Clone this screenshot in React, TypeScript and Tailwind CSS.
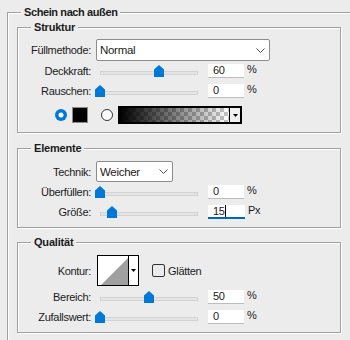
import React from "react";

const Label = ({ children }: { children: React.ReactNode }) => (
  <div className="w-[73px] mr-[5px] shrink-0 text-right leading-[14px]">{children}</div>
);

const Chevron = () => (
  <svg width="9" height="5" viewBox="0 0 9 5" className="shrink-0">
    <polyline points="0.5,0.5 4.5,4.5 8.5,0.5" fill="none" stroke="#505050" strokeWidth="1" />
  </svg>
);

const Select = ({ value, width, height }: { value: string; width: string; height: string }) => (
  <div
    className={`${width} ${height} flex items-center justify-between bg-white border border-[#8c8c8c] rounded-[2px] pl-[3px] pr-[4px]`}
  >
    <span className="text-[11.5px] leading-[14px]">{value}</span>
    <Chevron />
  </div>
);

const Slider = ({ pct }: { pct: number }) => {
  // thumb centre sits on the track, which starts 4px in and is 98px long
  const left = 4 + (pct / 100) * 98 - 5;
  return (
    <div className="relative w-[107px] h-[14px] shrink-0">
      <div className="absolute left-[4px] right-[5px] top-[7px] h-[4px] bg-[#e4e4e4] border border-[#d3d3d3]" />
      <svg
        className="absolute top-[1px]"
        style={{ left: `${left}px` }}
        width="10"
        height="12"
        viewBox="0 0 10 12"
      >
        <path d="M0 4.5 L5 0 L10 4.5 V12 H0 Z" fill="#0078d7" />
      </svg>
    </div>
  );
};

const Field = ({ value, focused }: { value: string; focused?: boolean }) => (
  <div
    className={
      focused
        ? "ml-[5px] w-[37px] h-[14px] bg-white border-b-2 border-[#0067c0] pl-[5px] flex items-center"
        : "ml-[5px] w-[36px] h-[14px] bg-white border-b border-[#bdbdbd] pl-[5px] flex items-center"
    }
  >
    <span className="leading-[13px]">{value}</span>
    {focused && <span className="w-px h-[12px] bg-black" />}
  </div>
);

const SliderRow = ({
  label,
  pct,
  value,
  unit,
  focused,
  className,
}: {
  label: string;
  pct: number;
  value: string;
  unit: string;
  focused?: boolean;
  className: string;
}) => (
  <div className={`flex items-center h-[14px] ${className}`}>
    <Label>{label}</Label>
    <Slider pct={pct} />
    <Field value={value} focused={focused} />
    <span className="ml-[3px] leading-[14px] -mt-[4px]">{unit}</span>
  </div>
);

const Group = ({
  title,
  className,
  children,
}: {
  title: string;
  className: string;
  children: React.ReactNode;
}) => (
  <fieldset
    className={`ml-[9px] w-[324px] border border-[#a0a0a0] shadow-[1px_1px_0_#ffffff,inset_1px_1px_0_#ffffff] pb-[8px] ${className}`}
  >
    <legend className="ml-[13px] px-[3px] bg-[#ececec] font-bold text-[11px] leading-[14px] tracking-[-0.2px]">
      {title}
    </legend>
    {children}
  </fieldset>
);

export default function App() {
  return (
    <div className="w-[350px] h-[340px] overflow-hidden bg-[#ececec] pt-[5px] pl-[7px] text-[11px] text-[#1b1b1b] font-['Liberation_Sans',Arial,sans-serif] tracking-[-0.3px]">
      <fieldset className="w-[360px] h-[400px] border-t border-l border-[#a0a0a0] shadow-[inset_1px_1px_0_#ffffff]">
        <legend className="ml-[13px] px-[3px] bg-[#ececec] font-bold text-[11px] leading-[14px] tracking-[-0.4px]">
          Schein nach außen
        </legend>

        <Group title="Struktur" className="mt-[1px]">
          <div className="mt-[5px] flex items-center h-[22px]">
            <Label>Füllmethode:</Label>
            <Select value="Normal" width="w-[174px]" height="h-[22px]" />
          </div>
          <SliderRow label="Deckkraft:" pct={60} value="60" unit="%" className="mt-[3px]" />
          <SliderRow label="Rauschen:" pct={0} value="0" unit="%" className="mt-[6px]" />
          <div className="mt-[8px] h-[18px] flex items-center">
            <svg width="12" height="12" viewBox="0 0 12 12" className="ml-[37px] shrink-0">
              <circle cx="6" cy="6" r="6" fill="#0078d7" />
              <circle cx="6" cy="6" r="2.5" fill="#ffffff" />
            </svg>
            <div className="ml-[5px] w-[16px] h-[16px] border border-[#8a8a8a] bg-black" />
            <svg width="12" height="12" viewBox="0 0 12 12" className="ml-[13px] shrink-0">
              <circle cx="6" cy="6" r="5.5" fill="#ffffff" stroke="#333333" strokeWidth="1" />
            </svg>
            <div className="ml-[5px] w-[124px] h-[18px] flex border-2 border-black bg-white">
              <div className="flex-1 bg-[repeating-conic-gradient(#c4c4c4_0_25%,#ffffff_0_50%)] bg-[length:8px_8px]">
                <div className="w-full h-full bg-gradient-to-r from-black to-transparent" />
              </div>
              <div className="w-[11px] border-l border-black flex items-center justify-center bg-[#f0f0f0]">
                <svg width="5" height="3" viewBox="0 0 5 3">
                  <path d="M0 0 H5 L2.5 3 Z" fill="#000" />
                </svg>
              </div>
            </div>
          </div>
        </Group>

        <Group title="Elemente" className="mt-[8px]">
          <div className="mt-[6px] flex items-center h-[21px]">
            <Label>Technik:</Label>
            <Select value="Weicher" width="w-[77px]" height="h-[21px]" />
          </div>
          <SliderRow label="Überfüllen:" pct={0} value="0" unit="%" className="mt-[3px]" />
          <SliderRow label="Größe:" pct={12} value="15" unit="Px" focused className="mt-[6px]" />
        </Group>

        <Group title="Qualität" className="mt-[7px]">
          <div className="mt-[6px] flex items-center h-[31px]">
            <Label>Kontur:</Label>
            <div className="ml-[1px] w-[42px] h-[31px] flex border border-black bg-white">
              <svg width="30" height="29" viewBox="0 0 30 29" className="shrink-0">
                <path d="M3 29 L30 2 V29 Z" fill="#a0a0a0" />
              </svg>
              <div className="flex-1 border-l border-black flex items-center justify-center">
                <svg width="5" height="3" viewBox="0 0 5 3">
                  <path d="M0 0 H5 L2.5 3 Z" fill="#000" />
                </svg>
              </div>
            </div>
            <div className="ml-[13px] w-[13px] h-[13px] rounded-[2px] border border-[#333333]" />
            <span className="ml-[3px] leading-[14px]">Glätten</span>
          </div>
          <SliderRow label="Bereich:" pct={50} value="50" unit="%" className="mt-[4px]" />
          <SliderRow label="Zufallswert:" pct={0} value="0" unit="%" className="mt-[6px]" />
        </Group>
      </fieldset>
    </div>
  );
}
